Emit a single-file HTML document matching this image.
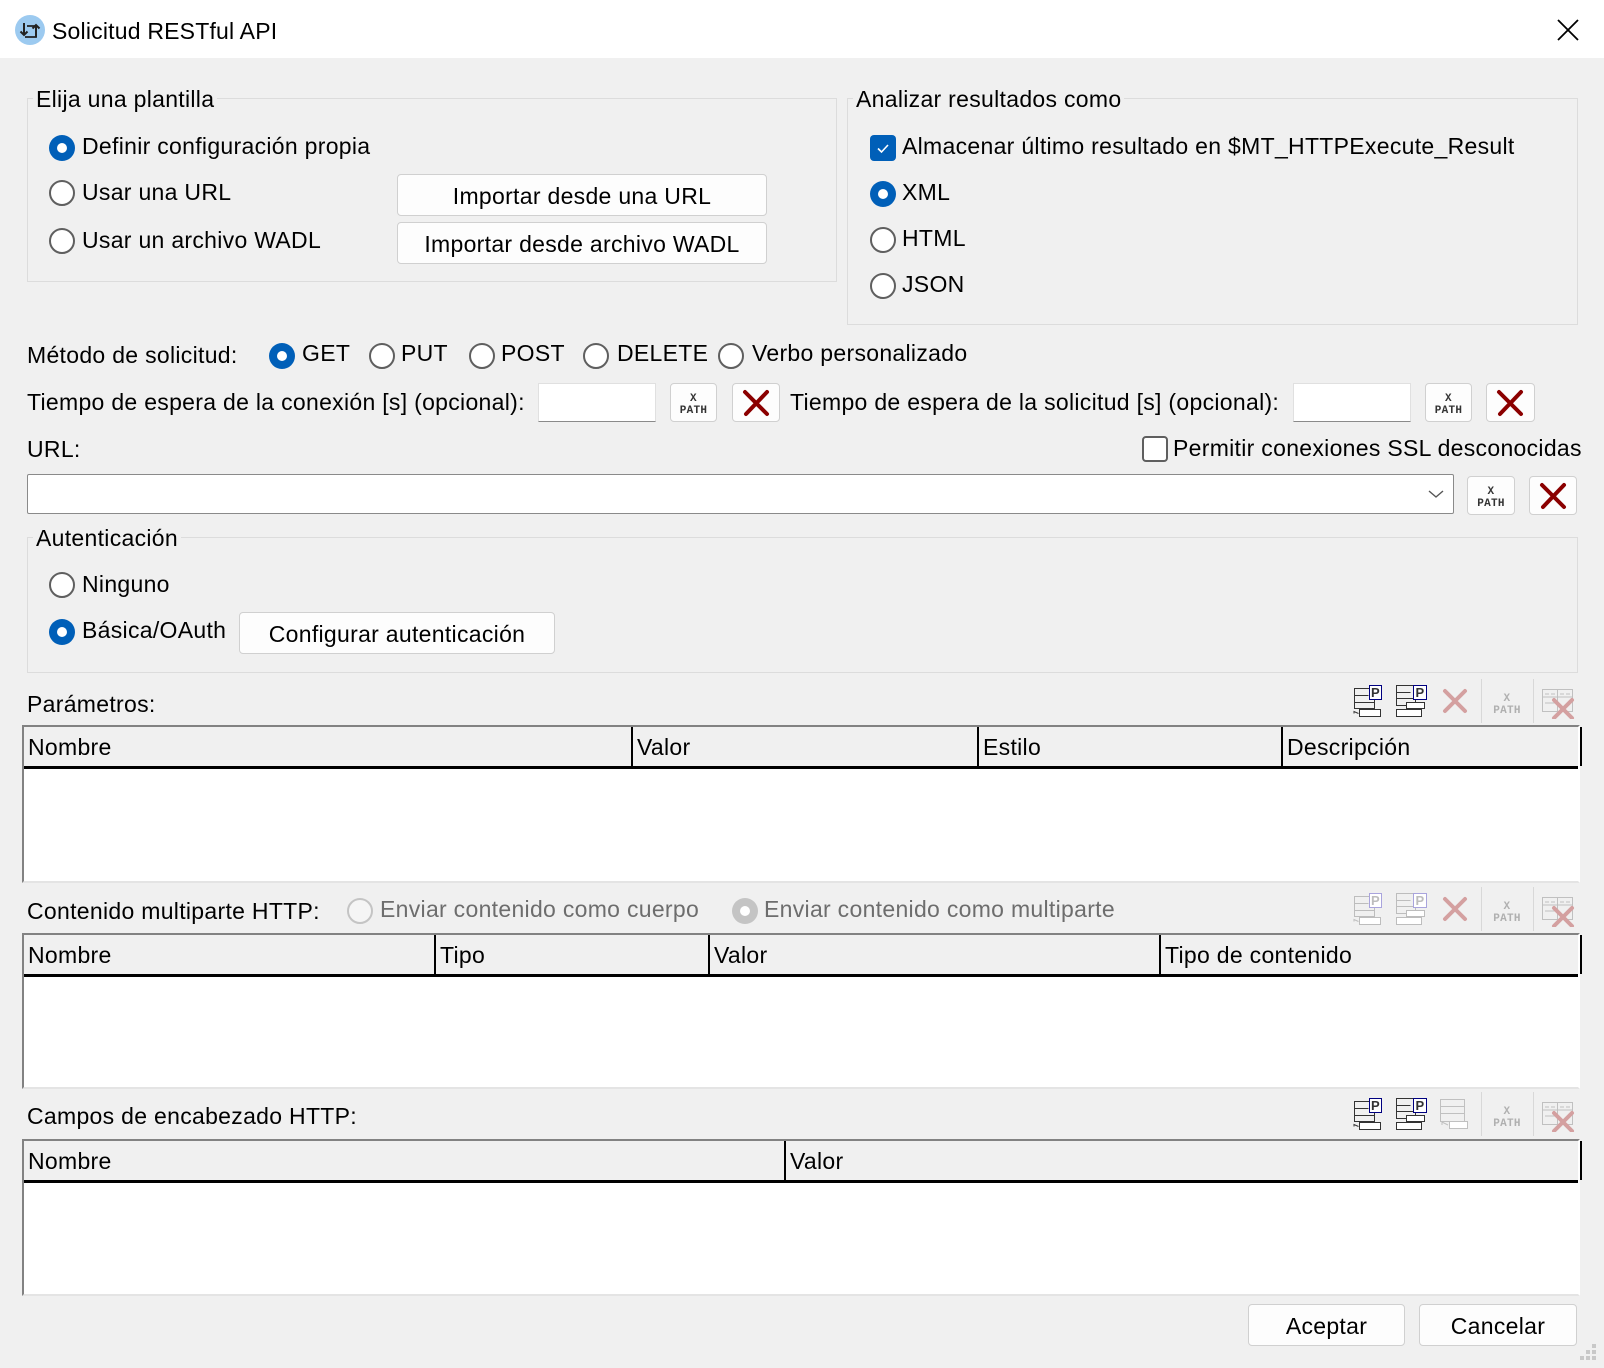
<!DOCTYPE html>
<html><head><meta charset="utf-8">
<style>
*{box-sizing:border-box;margin:0;padding:0}
body{width:1604px;height:1368px;background:#f0f0f0;font-family:"Segoe UI","Liberation Sans",sans-serif;font-size:23px;letter-spacing:0.3px;color:#000;position:relative;overflow:hidden}
.a{position:absolute;white-space:nowrap}
.t{position:absolute;white-space:nowrap;line-height:26px}
.grp{position:absolute;border:1px solid #dcdcdc}
.leg{position:absolute;background:#f0f0f0;padding:0 3px;line-height:26px;white-space:nowrap}
.r{position:absolute;width:26px;height:26px;border-radius:50%;border:2px solid #5f5f5f;background:#fff}
.r.on{border:none;background:#005fb8}
.r.on:after{content:"";position:absolute;left:8px;top:8px;width:10px;height:10px;border-radius:50%;background:#fff}
.r.dis{border-color:#c4c4c4;background:#f5f5f5}
.r.dison{border:none;background:#c4c4c4}
.r.dison:after{content:"";position:absolute;left:8px;top:8px;width:10px;height:10px;border-radius:50%;background:#fff}
.btn{position:absolute;background:#fdfdfd;border:1px solid #d0d0d0;border-radius:4px;text-align:center;white-space:nowrap}
.inp{position:absolute;background:#fff;border:1px solid #e0e0e0;border-bottom:1px solid #8a8a8a}
.tbl{position:absolute;background:#fff;border:2px solid #828282;border-right-color:#fff;border-bottom-color:#e4e4e4}
.hd{position:absolute;left:0;right:0;top:0;background:#f0f0f0;border-bottom:3px solid #000}
.hd span{position:absolute;top:0;line-height:40px;padding-left:4px;border-left:2px solid #000;height:100%}
.dis{color:#6d6d6d}
</style></head><body>
<!-- title bar -->
<div class="a" style="left:0;top:0;width:1604px;height:58px;background:#fff"></div>
<svg class="a" style="left:15px;top:15px" width="30" height="30" viewBox="0 0 30 30"><circle cx="15" cy="15" r="15" fill="#9ccaf0"/><path d="M9 8v12M5.5 16.5L9 20l3.5-3.5" stroke="#222" stroke-width="2" fill="none"/><path d="M12 11h9v11h-11" stroke="#222" stroke-width="1.8" fill="none"/><path d="M21 22V10M17.5 13.5L21 10l3.5 3.5" stroke="#222" stroke-width="2" fill="none"/></svg>
<div class="t" style="left:52px;top:18px;font-size:23px;letter-spacing:0.2px">Solicitud RESTful API</div>
<svg class="a" style="left:1557px;top:19px" width="22" height="22"><path d="M1 1L21 21M21 1L1 21" stroke="#000" stroke-width="1.8"/></svg>

<!-- Elija una plantilla -->
<div class="grp" style="left:27px;top:98px;width:810px;height:184px"></div>
<div class="leg" style="left:33px;top:86px">Elija una plantilla</div>
<div class="r on" style="left:49px;top:135px"></div><div class="t" style="left:82px;top:133px">Definir configuración propia</div>
<div class="r" style="left:49px;top:180px"></div><div class="t" style="left:82px;top:179px">Usar una URL</div>
<div class="r" style="left:49px;top:228px"></div><div class="t" style="left:82px;top:227px">Usar un archivo WADL</div>
<div class="btn" style="left:397px;top:174px;width:370px;height:42px;line-height:42px">Importar desde una URL</div>
<div class="btn" style="left:397px;top:222px;width:370px;height:42px;line-height:42px">Importar desde archivo WADL</div>

<!-- Analizar -->
<div class="grp" style="left:847px;top:98px;width:731px;height:227px"></div>
<div class="leg" style="left:853px;top:86px">Analizar resultados como</div>
<div class="a" style="left:870px;top:135px;width:26px;height:26px;border-radius:4px;background:#005fb8"><svg width="26" height="26"><path d="M8 13.5l3.5 3.5L18 10" stroke="#fff" stroke-width="1.6" fill="none"/></svg></div>
<div class="t" style="left:902px;top:133px">Almacenar último resultado en $MT_HTTPExecute_Result</div>
<div class="r on" style="left:870px;top:181px"></div><div class="t" style="left:902px;top:179px">XML</div>
<div class="r" style="left:870px;top:227px"></div><div class="t" style="left:902px;top:225px">HTML</div>
<div class="r" style="left:870px;top:273px"></div><div class="t" style="left:902px;top:271px">JSON</div>

<!-- Método -->
<div class="t" style="left:27px;top:342px">Método de solicitud:</div>
<div class="r on" style="left:269px;top:343px"></div><div class="t" style="left:302px;top:340px">GET</div>
<div class="r" style="left:369px;top:343px"></div><div class="t" style="left:401px;top:340px">PUT</div>
<div class="r" style="left:469px;top:343px"></div><div class="t" style="left:501px;top:340px">POST</div>
<div class="r" style="left:583px;top:343px"></div><div class="t" style="left:617px;top:340px">DELETE</div>
<div class="r" style="left:718px;top:343px"></div><div class="t" style="left:752px;top:340px">Verbo personalizado</div>

<!-- Tiempo -->
<div class="t" style="left:27px;top:389px">Tiempo de espera de la conexión [s] (opcional):</div>
<div class="inp" style="left:538px;top:383px;width:118px;height:39px"></div>
<div class="btn" style="left:670px;top:383px;width:47px;height:39px"><svg width="45" height="37"><text x="22.5" y="17" font-family="Liberation Mono,monospace" font-size="11" font-weight="bold" text-anchor="middle" fill="#333">X</text><text x="22.5" y="29" font-family="Liberation Mono,monospace" font-size="11" font-weight="bold" text-anchor="middle" fill="#333">PATH</text></svg></div>
<div class="btn" style="left:732px;top:383px;width:48px;height:39px"><svg width="46" height="37"><path d="M12 8L34 30M34 8L13 30" stroke="#8b0000" stroke-width="4" stroke-linecap="round"/></svg></div>
<div class="t" style="left:790px;top:389px">Tiempo de espera de la solicitud [s] (opcional):</div>
<div class="inp" style="left:1293px;top:383px;width:118px;height:39px"></div>
<div class="btn" style="left:1425px;top:383px;width:47px;height:39px"><svg width="45" height="37"><text x="22.5" y="17" font-family="Liberation Mono,monospace" font-size="11" font-weight="bold" text-anchor="middle" fill="#333">X</text><text x="22.5" y="29" font-family="Liberation Mono,monospace" font-size="11" font-weight="bold" text-anchor="middle" fill="#333">PATH</text></svg></div>
<div class="btn" style="left:1486px;top:383px;width:49px;height:39px"><svg width="47" height="37"><path d="M12 8L34 30M34 8L13 30" stroke="#8b0000" stroke-width="4" stroke-linecap="round"/></svg></div>

<!-- URL -->
<div class="t" style="left:27px;top:436px">URL:</div>
<div class="a" style="left:1142px;top:436px;width:26px;height:26px;border:2px solid #5f5f5f;border-radius:4px;background:#fff"></div>
<div class="t" style="left:1173px;top:435px">Permitir conexiones SSL desconocidas</div>
<div class="a" style="left:27px;top:474px;width:1427px;height:40px;background:#fff;border:1px solid #8a8a8a;border-radius:2px"><svg class="a" style="left:1400px;top:14px" width="16" height="10"><path d="M1 2l7 6 7-6" stroke="#555" stroke-width="1.4" fill="none"/></svg></div>
<div class="btn" style="left:1467px;top:476px;width:48px;height:39px"><svg width="46" height="37"><text x="23" y="17" font-family="Liberation Mono,monospace" font-size="11" font-weight="bold" text-anchor="middle" fill="#333">X</text><text x="23" y="29" font-family="Liberation Mono,monospace" font-size="11" font-weight="bold" text-anchor="middle" fill="#333">PATH</text></svg></div>
<div class="btn" style="left:1529px;top:476px;width:48px;height:39px"><svg width="46" height="37"><path d="M12 8L34 30M34 8L13 30" stroke="#8b0000" stroke-width="4" stroke-linecap="round"/></svg></div>

<!-- Autenticación -->
<div class="grp" style="left:27px;top:537px;width:1551px;height:136px"></div>
<div class="leg" style="left:33px;top:525px">Autenticación</div>
<div class="r" style="left:49px;top:572px"></div><div class="t" style="left:82px;top:571px">Ninguno</div>
<div class="r on" style="left:49px;top:619px"></div><div class="t" style="left:82px;top:617px">Básica/OAuth</div>
<div class="btn" style="left:239px;top:612px;width:316px;height:42px;line-height:42px">Configurar autenticación</div>

<svg width="0" height="0" style="position:absolute">
<defs>
<g id="ip1"><path d="M4.5 3.5h20v20h-20zM4.5 10.5h14M4.5 17.5h20" fill="none" stroke="currentColor" stroke-width="1"/><rect x="19.5" y="0.5" width="12" height="14" fill="#fff" stroke="var(--pc)" stroke-width="1"/><text x="25.5" y="12" font-family="Liberation Sans" font-weight="bold" font-size="13" text-anchor="middle" fill="currentColor">P</text><rect x="9.5" y="24.5" width="21" height="7" fill="#fff" stroke="currentColor"/><path d="M8.5 28.5L4 26.5v2" fill="none" stroke="currentColor"/></g>
<g id="ip2"><path d="M1.5 0.5h19v20h-19zM1.5 7.5h14M1.5 13.5h19" fill="none" stroke="currentColor" stroke-width="1"/><rect x="18.5" y="0.5" width="13" height="14" fill="#fff" stroke="var(--pc)" stroke-width="1"/><text x="25" y="12" font-family="Liberation Sans" font-weight="bold" font-size="13" text-anchor="middle" fill="currentColor">P</text><rect x="11.5" y="17.5" width="18" height="6" fill="#fff" stroke="currentColor"/><rect x="1.5" y="24.5" width="25" height="7" fill="#fff" stroke="currentColor"/><path d="M5 20.5h6" stroke="currentColor"/></g>
<g id="ix"><path d="M3 3L23 23M23 3L3 23" stroke="#d4a0a0" stroke-width="4" stroke-linecap="round"/></g>
<g id="ixp"><text x="16" y="11" font-family="Liberation Mono,monospace" font-size="11" font-weight="bold" text-anchor="middle" fill="#b0b0b0">X</text><text x="16" y="23" font-family="Liberation Mono,monospace" font-size="11" font-weight="bold" text-anchor="middle" fill="#b0b0b0">PATH</text></g>
<g id="itx"><path d="M0.5 0.5h30v22h-30zM0.5 8h30M15.5 0.5v22M3 5h4M9 5h4M18 5h4M24 5h4M3 14h10" fill="none" stroke="#c0c0c0"/><path d="M12 11L30 29M30 11L12 29" stroke="#d4a0a0" stroke-width="4" stroke-linecap="round"/></g>
<g id="ip3"><path d="M4.5 0.5h24v22h-24zM4.5 7.5h24M4.5 14.5h24" fill="none" stroke="#c0c0c0"/><rect x="13.5" y="22.5" width="18" height="7" fill="#fff" stroke="#c0c0c0"/><path d="M12 26L6 23v3" fill="none" stroke="#c0c0c0"/></g>
</defs></svg>

<!-- Parámetros -->
<div class="t" style="left:27px;top:691px">Parámetros:</div>
<svg class="a" style="left:1350px;top:685px;color:#333;--pc:#000080" width="34" height="34"><use href="#ip1"/></svg>
<svg class="a" style="left:1395px;top:685px;color:#333;--pc:#000080" width="34" height="34"><use href="#ip2"/></svg>
<svg class="a" style="left:1442px;top:688px" width="27" height="27"><use href="#ix"/></svg>
<div class="a" style="left:1481px;top:679px;width:1px;height:44px;background:#d8d8d8"></div>
<svg class="a" style="left:1491px;top:690px" width="32" height="25"><use href="#ixp"/></svg>
<div class="a" style="left:1533px;top:679px;width:1px;height:44px;background:#d8d8d8"></div>
<svg class="a" style="left:1542px;top:689px" width="34" height="30"><use href="#itx"/></svg>
<div class="tbl" style="left:22px;top:725px;width:1558px;height:158px"><div class="hd" style="height:42px"><span style="left:0;border-left:none">Nombre</span><span style="left:607px">Valor</span><span style="left:953px">Estilo</span><span style="left:1257px">Descripción</span><span style="left:1556px;padding:0"></span></div></div>

<!-- Multiparte -->
<div class="t" style="left:27px;top:898px">Contenido multiparte HTTP:</div>
<div class="r dis" style="left:347px;top:898px"></div><div class="t dis" style="left:380px;top:896px">Enviar contenido como cuerpo</div>
<div class="r dison" style="left:732px;top:898px"></div><div class="t dis" style="left:764px;top:896px">Enviar contenido como multiparte</div>
<svg class="a" style="left:1350px;top:893px;color:#bdbdbd;--pc:#a9a4dd" width="34" height="34"><use href="#ip1"/></svg>
<svg class="a" style="left:1395px;top:893px;color:#bdbdbd;--pc:#a9a4dd" width="34" height="34"><use href="#ip2"/></svg>
<svg class="a" style="left:1442px;top:896px" width="27" height="27"><use href="#ix"/></svg>
<div class="a" style="left:1481px;top:887px;width:1px;height:44px;background:#d8d8d8"></div>
<svg class="a" style="left:1491px;top:898px" width="32" height="25"><use href="#ixp"/></svg>
<div class="a" style="left:1533px;top:887px;width:1px;height:44px;background:#d8d8d8"></div>
<svg class="a" style="left:1542px;top:897px" width="34" height="30"><use href="#itx"/></svg>
<div class="tbl" style="left:22px;top:933px;width:1558px;height:156px"><div class="hd" style="height:42px"><span style="left:0;border-left:none">Nombre</span><span style="left:410px">Tipo</span><span style="left:684px">Valor</span><span style="left:1135px">Tipo de contenido</span><span style="left:1556px;padding:0"></span></div></div>

<!-- Campos -->
<div class="t" style="left:27px;top:1103px">Campos de encabezado HTTP:</div>
<svg class="a" style="left:1350px;top:1098px;color:#333;--pc:#000080" width="34" height="34"><use href="#ip1"/></svg>
<svg class="a" style="left:1395px;top:1098px;color:#333;--pc:#000080" width="34" height="34"><use href="#ip2"/></svg>
<svg class="a" style="left:1436px;top:1099px" width="34" height="32"><use href="#ip3"/></svg>
<div class="a" style="left:1481px;top:1092px;width:1px;height:44px;background:#d8d8d8"></div>
<svg class="a" style="left:1491px;top:1103px" width="32" height="25"><use href="#ixp"/></svg>
<div class="a" style="left:1533px;top:1092px;width:1px;height:44px;background:#d8d8d8"></div>
<svg class="a" style="left:1542px;top:1102px" width="34" height="30"><use href="#itx"/></svg>
<div class="tbl" style="left:22px;top:1139px;width:1558px;height:157px"><div class="hd" style="height:42px"><span style="left:0;border-left:none">Nombre</span><span style="left:760px">Valor</span><span style="left:1556px;padding:0"></span></div></div>

<!-- bottom buttons -->
<div class="btn" style="left:1248px;top:1304px;width:157px;height:42px;line-height:42px">Aceptar</div>
<div class="btn" style="left:1419px;top:1304px;width:158px;height:42px;line-height:42px">Cancelar</div>
<svg class="a" style="left:1580px;top:1344px" width="18" height="18"><g fill="#c8c8c8"><rect x="12" y="0" width="4" height="4"/><rect x="6" y="6" width="4" height="4"/><rect x="12" y="6" width="4" height="4"/><rect x="0" y="12" width="4" height="4"/><rect x="6" y="12" width="4" height="4"/><rect x="12" y="12" width="4" height="4"/></g></svg>
</body></html>
